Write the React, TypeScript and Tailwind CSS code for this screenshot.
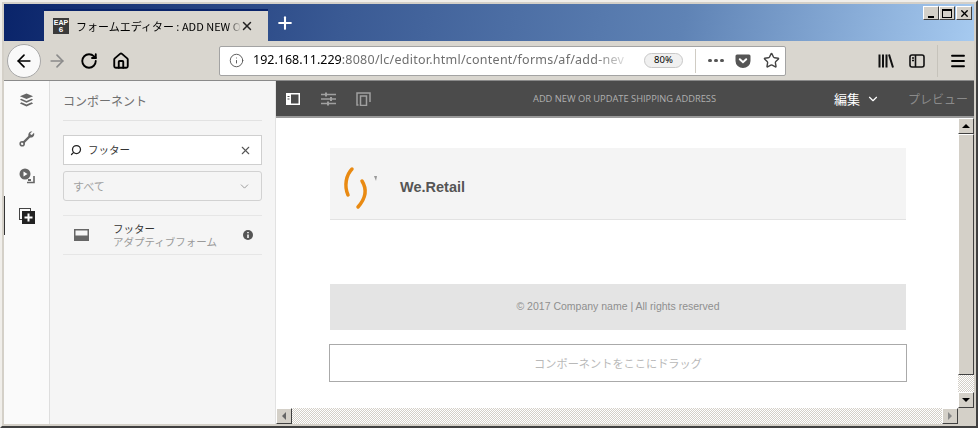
import React from 'react';
import { ArrowLeft, ArrowRight, RotateCw, Home, Info, X, Plus, Star, Menu, ChevronDown, Search } from 'lucide-react';

const jp = 'font-["Noto_Sans_CJK_JP","Noto_Sans",sans-serif]';

function WinButton({ children }: { children: React.ReactNode }) {
  return (
    <div className="flex h-[14px] w-[16px] items-center justify-center border border-t-white border-l-white border-r-[#404040] border-b-[#404040] bg-[#d4d0c8]">
      {children}
    </div>
  );
}

function ScrollButton({ children }: { children: React.ReactNode }) {
  return (
    <div className="flex h-[16px] w-[16px] shrink-0 items-center justify-center border border-t-white border-l-white border-r-[#404040] border-b-[#404040] bg-[#d4d0c8]">
      {children}
    </div>
  );
}

function TitleBar() {
  return (
    <div className="flex h-[37px] bg-[linear-gradient(100deg,#0a246a_0%,#3a5a94_35%,#5f83b5_70%,#a6caf0_100%)]">
      <div className="w-[40px] border-b border-[#0a246a]" />
      <div className="mt-[5px] flex h-[32px] w-[224px] items-center border-t-2 border-[#0a246a] bg-[#d9d6cf] pl-[9px] pr-[8px]">
        <div className="flex h-[16px] w-[16px] shrink-0 flex-col items-center justify-center bg-[#3a3a3a] font-['Liberation_Sans',sans-serif] text-[7px] font-bold leading-[7px] text-white">
          <span>EAP</span>
          <span className="text-[8px]">6</span>
        </div>
        <span className={`ml-[7px] w-[165px] overflow-hidden whitespace-nowrap text-[11px] text-black [mask-image:linear-gradient(to_right,black_92%,transparent)] ${jp}`}>
          フォームエディター : ADD NEW O
        </span>
        <X size={14} strokeWidth={2.5} className="-ml-[1px] text-[#222]" />
      </div>
      <div className="ml-[7px] flex h-[37px] items-center">
        <Plus size={20} strokeWidth={2.5} className="text-white" />
      </div>
      <div className="ml-auto mr-[2px] mt-[2px] flex">
        <WinButton><div className="mt-[7px] h-[2px] w-[6px] bg-black" /></WinButton>
        <WinButton><div className="h-[9px] w-[10px] border border-t-2 border-black" /></WinButton>
        <div className="ml-[1px]">
          <WinButton><X size={11} strokeWidth={3} className="text-black" /></WinButton>
        </div>
      </div>
    </div>
  );
}

function NavBar() {
  return (
    <div className="flex h-[40px] items-center border-b border-[#8a8a8a] bg-[#d9d6cf]">
      <div className="ml-[3px] flex h-[34px] w-[34px] items-center justify-center rounded-full border border-[#a8a8a8] bg-[#f9f9f9]">
        <ArrowLeft size={20} strokeWidth={2} className="text-black" />
      </div>
      <ArrowRight size={20} strokeWidth={2} className="ml-[6px] text-[#8b8b8b]" />
      <RotateCw size={18} strokeWidth={2.5} className="ml-[13px] text-black" />
      <Home size={18} strokeWidth={2.5} className="ml-[14px] text-black" />
      <div className="ml-[89px] flex h-[30px] w-[567px] items-center rounded-[2px] border border-[#a3a3a3] bg-white">
        <Info size={15} strokeWidth={1.5} className="ml-[9px] text-[#555]" />
        <div className="ml-[9px] w-[380px] whitespace-nowrap font-['Noto_Sans',sans-serif] text-[12.5px] text-[#6f6f6f] [mask-image:linear-gradient(to_right,black_90%,transparent)]">
          <span className="text-black">192.168.11.229</span>
          <span className="tracking-[0.25px]">:8080/lc/editor.html/content/forms/af/add-nev</span>
        </div>
        <div className="ml-[11px] flex h-[15px] w-[39px] items-center justify-center rounded-full border border-[#c8c8c8] bg-[#f0f0f0] font-['Noto_Sans',sans-serif] text-[9.5px] text-black">
          80%
        </div>
        <div className="ml-[12px] h-[24px] w-px bg-[#d0ccc4]" />
        <div className="ml-[12px] flex w-[16px] gap-[2px]">
          <div className="h-[3px] w-[4px] rounded-full bg-[#555]" />
          <div className="h-[3px] w-[4px] rounded-full bg-[#555]" />
          <div className="h-[3px] w-[4px] rounded-full bg-[#555]" />
        </div>
        <svg viewBox="0 0 16 16" className="ml-[11px] h-[16px] w-[16px]">
          <path d="M2 1.5h12a1.5 1.5 0 0 1 1.5 1.5v5a7.5 7 0 0 1-15 0V3A1.5 1.5 0 0 1 2 1.5z" fill="#555" />
          <path d="M4.8 6.2L8 9.2l3.2-3" fill="none" stroke="#fff" strokeWidth="2" strokeLinecap="round" />
        </svg>
        <Star size={17} strokeWidth={2} className="ml-[12px] text-[#444]" />
      </div>
      <svg viewBox="0 0 16 16" className="ml-[92px] h-[16px] w-[16px]" fill="none" stroke="#111" strokeWidth="2">
        <path d="M1.5 1.5v13M5 1.5v13M8.5 1.5v13M11 1.5l4 13" />
      </svg>
      <svg viewBox="0 0 16 16" className="ml-[15px] h-[16px] w-[16px]" fill="none" stroke="#111" strokeWidth="1.6">
        <rect x="1" y="2" width="14" height="12" rx="2" />
        <path d="M6.5 2v12M3 5h2M3 7.5h2" />
      </svg>
      <div className="ml-[12px] h-[32px] w-px bg-[#c6c3bb]" />
      <Menu size={18} strokeWidth={2.5} className="ml-[11px] text-black" />
    </div>
  );
}

function Rail() {
  return (
    <div className="flex w-[46px] shrink-0 flex-col items-center border-r border-[#dedede] bg-[#fafafa] pt-[12px]">
      <svg viewBox="0 0 16 14" className="h-[14px] w-[15px]" fill="#666">
        <path d="M8 0l7 3-7 3-7-3zM2.5 5.6L8 8l5.5-2.4L15 6.8 8 10 1 6.8zM2.5 9.4L8 11.8l5.5-2.4L15 10.6 8 14l-7-3.4z" />
      </svg>
      <svg viewBox="0 0 16 16" className="mt-[24px] h-[16px] w-[16px]" fill="none" stroke="#666">
        <path d="M4 12L11 5" strokeWidth="2.4" />
        <circle cx="3.2" cy="12.8" r="2" strokeWidth="1.6" />
        <path d="M15 1.8l-2.2 2.2-1.2-0.6-0.4-1.2L13.400 0.5C11 0 8.800 2 9.500 5l1.500 1.500c3 0.500 5-1.800 4-4.700z" fill="#666" stroke="none" />
      </svg>
      <svg viewBox="0 0 16 16" className="mt-[21px] h-[16px] w-[16px]">
        <circle cx="6" cy="6" r="5.5" fill="#666" />
        <path d="M4.500 3.500l4 2.500-4 2.500z" fill="#fff" />
        <path d="M8 14.500h7V8" fill="none" stroke="#666" strokeWidth="1.6" />
        <path d="M9 11h3v2H9z" fill="#666" />
      </svg>
      <div className="relative mt-[12px] flex h-[39px] w-full items-center justify-center">
        <div className="absolute bottom-0 left-0 top-0 w-px bg-[#333]" />
        <svg viewBox="0 0 16 16" className="h-[16px] w-[16px]">
          <rect x="0.5" y="0.5" width="11" height="11" fill="none" stroke="#444" />
          <rect x="3" y="3" width="13" height="13" fill="#222" />
          <path d="M9.500 5.500v8M5.500 9.500h8" stroke="#fff" strokeWidth="2" />
        </svg>
      </div>
    </div>
  );
}

function Panel() {
  return (
    <div className={`flex w-[226px] shrink-0 flex-col border-r border-[#e2e2e2] bg-[#f5f5f5] px-[13px] ${jp}`}>
      <div className="flex h-[40px] items-center border-b border-[#e2e2e2] text-[12px] text-[#707070]">コンポーネント</div>
      <div className="mt-[14px] flex h-[30px] items-center border border-[#cfcfcf] bg-white pl-[6px] pr-[9px]">
        <Search size={12} strokeWidth={2.5} className="-scale-x-100 text-[#222]" />
        <span className="ml-[6px] text-[10.5px] text-[#333]">フッター</span>
        <X size={13} strokeWidth={2} className="ml-auto text-[#555]" />
      </div>
      <div className="mt-[6px] flex h-[30px] items-center rounded-[3px] border border-[#d2d2d2] bg-[#f5f5f5] pl-[9px] pr-[10px] text-[11px] text-[#a0a0a0]">
        すべて
        <ChevronDown size={13} strokeWidth={1.5} className="ml-auto text-[#888]" />
      </div>
      <div className="mt-[14px] flex h-[40px] items-center border-y border-[#e6e6e6] pl-[11px] pr-[9px]">
        <svg viewBox="0 0 15 12" className="h-[12px] w-[15px]">
          <rect width="15" height="12" fill="#666" />
          <rect x="1.5" y="1.5" width="12" height="5" fill="#f5f5f5" />
        </svg>
        <div className="ml-[24px] flex flex-col">
          <span className="text-[10.5px] leading-[13px] text-[#333]">フッター</span>
          <span className="text-[10.5px] leading-[13px] text-[#9a9a9a]">アダプティブフォーム</span>
        </div>
        <svg viewBox="0 0 10 10" className="ml-auto h-[10px] w-[10px]">
          <circle cx="5" cy="5" r="5" fill="#555" />
          <path d="M5 2v1.200M5 4.500V8" stroke="#fff" strokeWidth="1.5" />
        </svg>
      </div>
    </div>
  );
}

function Toolbar() {
  return (
    <div className="flex h-[37px] shrink-0 items-center border-b-2 border-[#9a9a9a] bg-[#4b4b4b]">
      <svg viewBox="0 0 14 12" className="ml-[10px] h-[12px] w-[14px]">
        <rect width="14" height="12" fill="#fff" />
        <rect x="5" y="1.5" width="7.5" height="9" fill="#4b4b4b" />
        <path d="M1.500 3.500h2M1.500 6h2" stroke="#4b4b4b" />
      </svg>
      <svg viewBox="0 0 15 14" className="ml-[21px] h-[14px] w-[15px]" fill="none" stroke="#a0a0a0" strokeWidth="1.5">
        <path d="M0 2.500h15M0 7h15M0 11.500h15" />
        <path d="M5 0.500v4M10 5v4M7 9.500v4" strokeWidth="2" />
      </svg>
      <svg viewBox="0 0 15 14" className="ml-[20px] h-[14px] w-[15px]" fill="none" stroke="#a0a0a0" strokeWidth="1.5">
        <path d="M2.500 13H1V1h13v9" />
        <rect x="4.500" y="4" width="6" height="9.500" />
      </svg>
      <span className="ml-[162px] w-[186px] whitespace-nowrap font-['Open_Sans',sans-serif] text-[9.3px] text-[#b0b0b0]">
        ADD NEW OR UPDATE SHIPPING ADDRESS
      </span>
      <span className={`ml-[115px] text-[13px] text-white ${jp}`}>編集</span>
      <ChevronDown size={14} strokeWidth={2} className="ml-[6px] text-white" />
      <span className={`ml-[28px] whitespace-nowrap text-[12px] text-[#8a8a8a] ${jp}`}>プレビュー</span>
    </div>
  );
}

function Canvas() {
  return (
    <div className="flex min-w-0 flex-1 flex-col bg-white pl-[54px] pt-[30px]">
      <div className="flex h-[72px] w-[576px] shrink-0 items-center border-b border-[#e2e2e2] bg-[#f4f4f4] pl-[13px] pt-[8px]">
        <svg viewBox="0 0 36 44" className="h-[44px] w-[36px]" fill="none">
          <path d="M9 3C3 9 1 20 5 29" stroke="#e98a12" strokeWidth="3.5" strokeLinecap="round" />
          <path d="M19 15c5 8 4 17-4 26" stroke="#e98a12" strokeWidth="3.5" strokeLinecap="round" />
          <path d="M31 10h3l-1 5z" fill="#999" />
        </svg>
        <span className="ml-[21px] font-['Liberation_Sans',sans-serif] text-[14.5px] font-bold text-[#555]">We.Retail</span>
      </div>
      <div className="mt-[64px] flex h-[46px] w-[576px] shrink-0 items-center justify-center bg-[#e4e4e4] font-['Liberation_Sans',sans-serif] text-[10.5px] text-[#8f8f8f]">
        © 2017 Company name | All rights reserved
      </div>
      <div className={`-ml-px mt-[14px] flex h-[38px] w-[578px] shrink-0 items-center justify-center border border-[#aaaaaa] text-[11.2px] text-[#b9b9b9] ${jp}`}>
        コンポーネントをここにドラッグ
      </div>
    </div>
  );
}

const checker = 'bg-[repeating-conic-gradient(#d4d0c8_0_25%,#ffffff_0_50%)] bg-[length:2px_2px]';

export default function App() {
  return (
    <div className="h-[428px] w-[978px] border-2 border-t-[#f0eeea] border-l-[#f0eeea] border-r-[#404040] border-b-[#404040] bg-[#d4d0c8] p-[2px]">
      <div className="flex h-full w-full flex-col overflow-hidden">
        <TitleBar />
        <NavBar />
        <div className="flex min-h-0 flex-1">
          <Rail />
          <Panel />
          <div className="flex min-w-0 flex-1 flex-col">
            <Toolbar />
            <div className="flex min-h-0 flex-1">
              <Canvas />
              <div className={`flex w-[16px] shrink-0 flex-col ${checker}`}>
                <ScrollButton>
                  <div className="h-0 w-0 border-x-[4px] border-b-[4px] border-x-transparent border-b-black" />
                </ScrollButton>
                <div className="h-[241px] border border-t-white border-l-white border-r-[#404040] border-b-[#404040] bg-[#d4d0c8]" />
                <div className="flex-1" />
                <ScrollButton>
                  <div className="h-0 w-0 border-x-[4px] border-t-[4px] border-x-transparent border-t-black" />
                </ScrollButton>
              </div>
            </div>
            <div className={`flex h-[16px] shrink-0 ${checker}`}>
              <ScrollButton>
                <div className="h-0 w-0 border-y-[4px] border-r-[4px] border-y-transparent border-r-[#666]" />
              </ScrollButton>
              <div className="flex-1" />
              <ScrollButton>
                <div className="h-0 w-0 border-y-[4px] border-l-[4px] border-y-transparent border-l-[#888]" />
              </ScrollButton>
              <div className="w-[16px] bg-[#d4d0c8]" />
            </div>
          </div>
        </div>
      </div>
    </div>
  );
}
